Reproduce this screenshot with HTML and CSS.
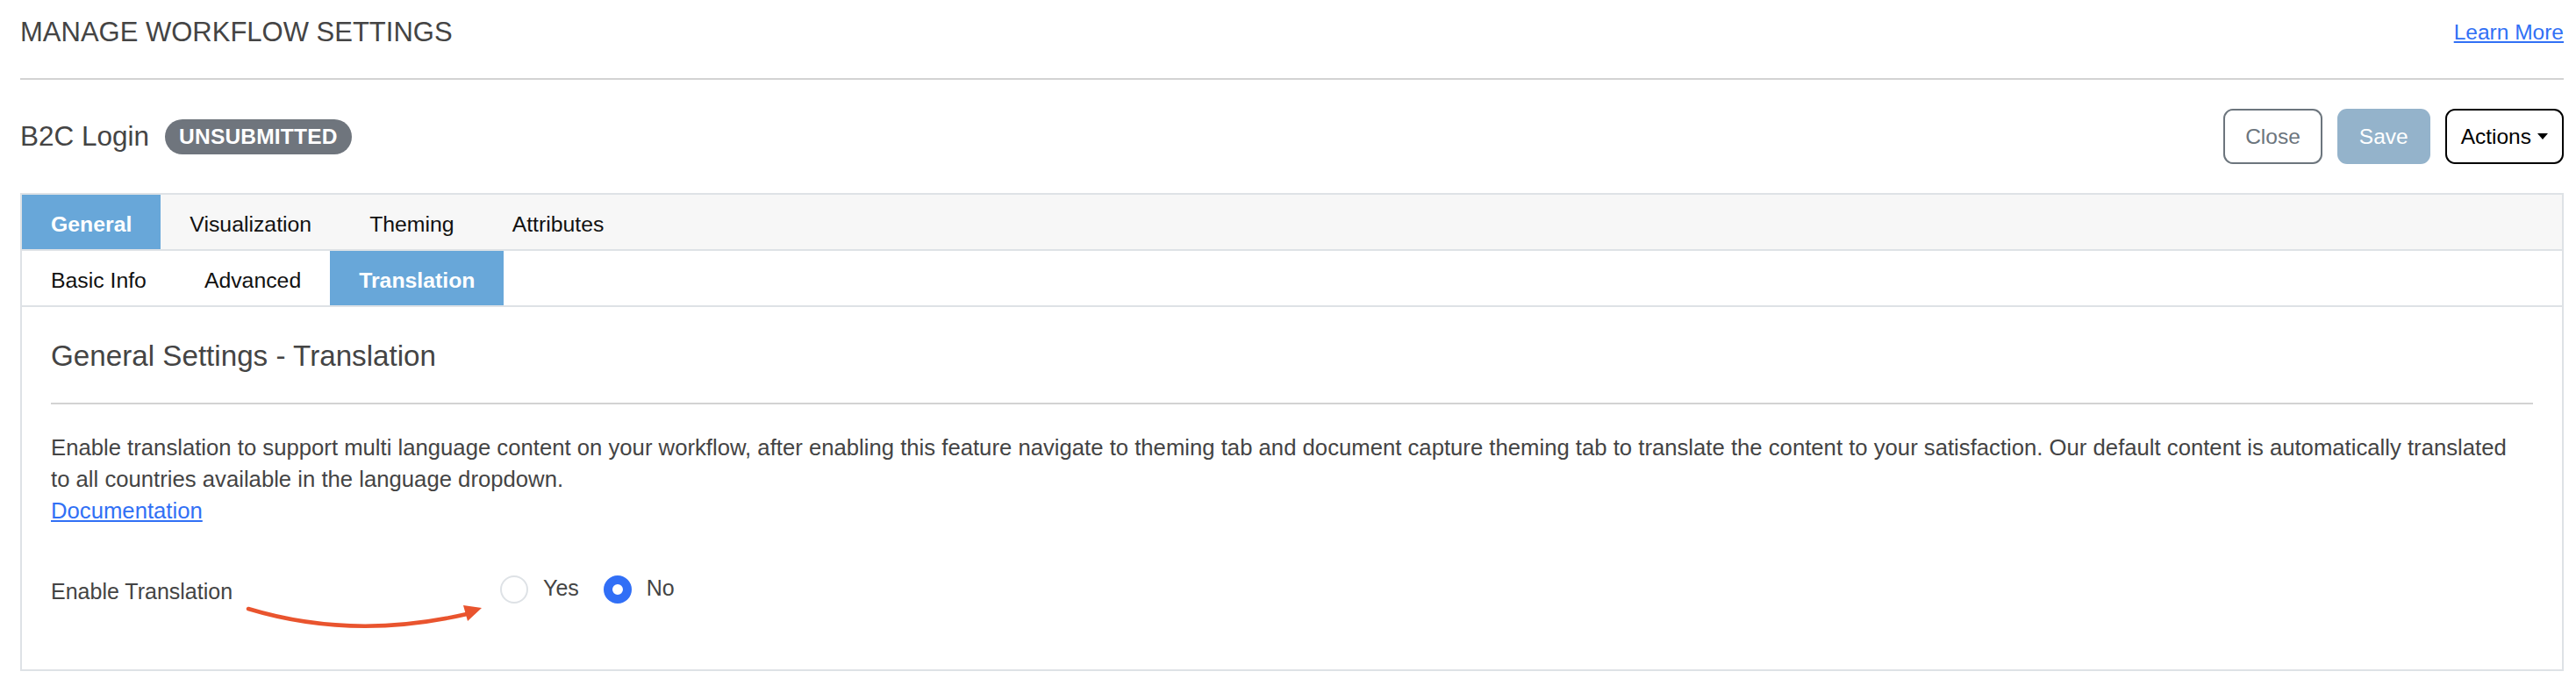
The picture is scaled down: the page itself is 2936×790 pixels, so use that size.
FILE: index.html
```html
<!DOCTYPE html>
<html lang="en">
<head>
<meta charset="utf-8">
<title>Manage Workflow Settings</title>
<link rel="stylesheet" href="styles.css">
</head>
<body>
<div class="page">
  <header class="top">
    <h1 class="title">MANAGE WORKFLOW SETTINGS</h1>
    <a class="learn" href="#">Learn More</a>
  </header>

  <div class="bar">
    <div class="name">
      <span class="wf-name">B2C Login</span>
      <span class="badge">UNSUBMITTED</span>
    </div>
    <div class="actions">
      <button class="btn btn-close">Close</button>
      <button class="btn btn-save">Save</button>
      <button class="btn btn-actions">Actions<span class="caret"></span></button>
    </div>
  </div>

  <section class="card">
    <nav class="tabs tabs-main">
      <a class="tab active" href="#">General</a>
      <a class="tab" href="#">Visualization</a>
      <a class="tab" href="#">Theming</a>
      <a class="tab" href="#">Attributes</a>
    </nav>
    <nav class="tabs tabs-sub">
      <a class="tab" href="#">Basic Info</a>
      <a class="tab" href="#">Advanced</a>
      <a class="tab active" href="#">Translation</a>
    </nav>
    <div class="card-body">
      <h2 class="section-title">General Settings - Translation</h2>
      <hr class="rule">
      <p class="desc">Enable translation to support multi language content on your workflow, after enabling this feature navigate to theming tab and document capture theming tab to translate the content to your satisfaction. Our default content is automatically translated<br>to all countries available in the language dropdown.<a class="doc" href="#">Documentation</a></p>
      <div class="form-row">
        <span class="form-label">Enable Translation</span>
        <div class="radios">
          <label class="radio"><span class="circle"></span><span>Yes</span></label>
          <label class="radio"><span class="circle checked"></span><span>No</span></label>
        </div>
        <svg class="arrow" width="520" height="80" viewBox="0 0 520 80">
          <path d="M225 42 Q344 78 474 48" fill="none" stroke="#e9542e" stroke-width="4.5" stroke-linecap="round"/>
          <polygon points="470,38 491,41 475,56" fill="#e9542e"/>
        </svg>
      </div>
    </div>
  </section>
</div>
</body>
</html>
```

FILE: styles.css
```css
* { box-sizing: border-box; }

body {
  margin: 0;
  background: #fff;
  color: #444;
  font-family: "Liberation Sans", Arial, sans-serif;
}

.page {
  padding: 0 14px 0 23px;
}

.top {
  display: flex;
  justify-content: space-between;
  align-items: center;
  height: 91px;
  padding-bottom: 15px;
  border-bottom: 2px solid #d3d3d3;
}

.title {
  margin: 0;
  font-size: 31px;
  font-weight: 400;
  line-height: 1.2;
  color: #444;
}

.learn {
  font-size: 24.5px;
  color: #3170f5;
  text-decoration: underline;
}

.bar {
  display: flex;
  justify-content: space-between;
  align-items: center;
  height: 63px;
  margin-top: 33px;
}

.name {
  display: flex;
  align-items: center;
}

.wf-name {
  font-size: 31.5px;
  color: #444;
}

.badge {
  display: inline-flex;
  align-items: center;
  height: 40px;
  margin-left: 18px;
  padding: 0 16px;
  border-radius: 20px;
  background: #6f757d;
  color: #fff;
  font-size: 24.5px;
  font-weight: 700;
  letter-spacing: 0.2px;
}

.actions {
  display: flex;
  gap: 17px;
}

.btn {
  display: inline-flex;
  align-items: center;
  height: 63px;
  padding: 0 23px;
  border: 2px solid transparent;
  border-radius: 11px;
  background: none;
  font-family: inherit;
  font-size: 24.5px;
  cursor: pointer;
}

.btn-close {
  border-color: #6c757d;
  color: #6c757d;
}

.btn-save {
  background: #94b3cb;
  color: #fff;
}

.btn-actions {
  padding: 0 16px;
  border-color: #000;
  color: #000;
}

.caret {
  width: 0;
  height: 0;
  margin-left: 7px;
  border-left: 6.5px solid transparent;
  border-right: 6.5px solid transparent;
  border-top: 7px solid #000;
}

.card {
  margin-top: 33px;
  border: 2px solid #dee2e6;
}

.tabs {
  display: flex;
  height: 64px;
  border-bottom: 2px solid #dee2e6;
}

.tabs-main {
  background: #f7f7f7;
}

.tab {
  display: flex;
  align-items: center;
  padding: 6px 33px 0;
  font-size: 24.8px;
  color: #111;
  text-decoration: none;
}

.tab.active {
  background: #68a7d9;
  color: #fff;
  font-weight: 700;
}

.card-body {
  padding: 36px 33px 71px;
}

.section-title {
  margin: 0;
  font-size: 33.2px;
  line-height: 40px;
  font-weight: 400;
  color: #444;
}

.rule {
  height: 2px;
  margin: 33px 0 0;
  border: 0;
  background: #d3d3d3;
}

.desc {
  margin: 31px 0 0;
  font-size: 25.7px;
  line-height: 36px;
  color: #444;
}

.doc {
  display: block;
  width: max-content;
  color: #3170f5;
  text-decoration: underline;
}

.form-row {
  position: relative;
  display: flex;
  margin-top: 52px;
}

.form-label {
  width: 512px;
  padding-top: 4px;
  font-size: 25px;
  line-height: 36px;
  color: #444;
}

.radios {
  display: flex;
}

.radio {
  display: flex;
  align-items: flex-start;
  margin-right: 28px;
  font-size: 25px;
  line-height: 36px;
  color: #444;
}

.circle {
  width: 32px;
  height: 32px;
  margin: 4px 17px 0 0;
  border: 2px solid #dee2e6;
  border-radius: 50%;
  background: #fff;
}

.circle.checked {
  border: 10px solid #316ff6;
}

.arrow {
  position: absolute;
  left: 0;
  top: 0;
  overflow: visible;
  pointer-events: none;
}
```
